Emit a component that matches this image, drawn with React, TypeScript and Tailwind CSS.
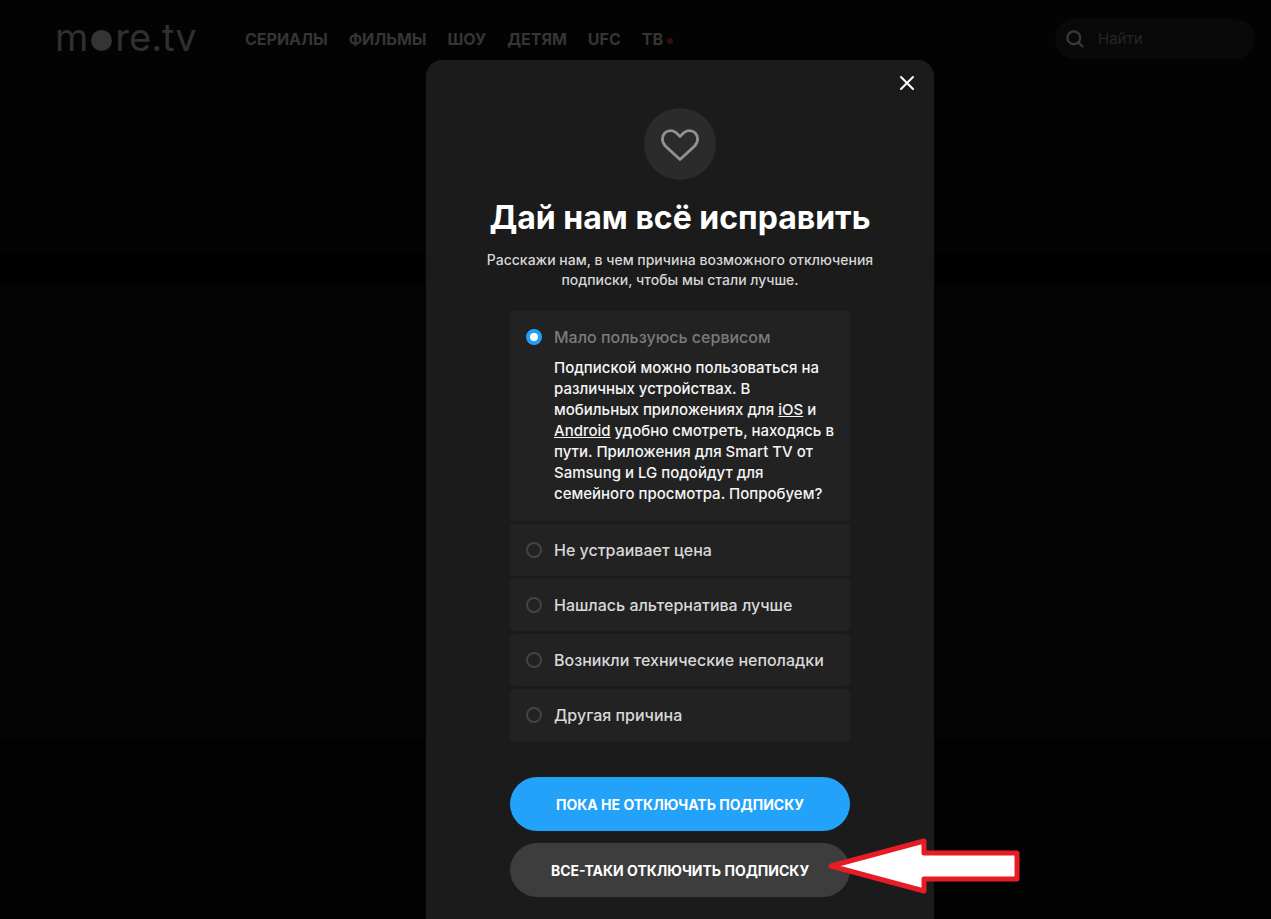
import React, { useState } from 'react'

const links = [
    { name: "Сериалы", url: "#series" },
    { name: "Фильмы", url: "#movies" },
    { name: "Шоу", url: "#shows" },
    { name: "Детям", url: "#kids" },
    { name: "UFC", url: "#ufc" },
    { name: "ТВ", url: "#tv", live: true }
]

const reasons = [
    { id: "rarely", label: "Мало пользуюсь сервисом" },
    { id: "price", label: "Не устраивает цена" },
    { id: "alternative", label: "Нашлась альтернатива лучше" },
    { id: "technical", label: "Возникли технические неполадки" },
    { id: "other", label: "Другая причина" }
]

const Logo = () => (
    <a href="#home" aria-label="more.tv" className="flex items-baseline gap-[3px] pb-1 text-[38px] leading-none text-[#303030]">
        <span>m</span>
        <span className="w-[21px] h-[21px] rounded-full bg-[#343434]"></span>
        <span>re.tv</span>
    </a>
)

const Header = () => (
    <header className="flex items-center h-[78px] pl-[55px] pr-4">
        <div className="w-[190px]">
            <Logo />
        </div>
        <nav>
            <ul className="flex items-center gap-[21px]">
                {links.map((link) => (
                    <li key={link.url}>
                        <a href={link.url} className="flex items-center gap-1 text-base leading-5 font-bold uppercase text-[#353535]">
                            {link.name}
                            {link.live && <span className="w-[6px] h-[6px] mt-1 rounded-full bg-[#3a0a0c]"></span>}
                        </a>
                    </li>
                ))}
            </ul>
        </nav>
        <label className="flex items-center gap-[14px] w-[200px] h-10 ml-auto pl-[11px] rounded-full bg-[#090909]">
            <svg width="18" height="18" viewBox="0 0 18 18" fill="none" stroke="#3a3a3a" strokeWidth="2.2" className="shrink-0">
                <circle cx="7.8" cy="7.8" r="6.4" />
                <path d="M12.4 12.4L17 17" />
            </svg>
            <input type="search" aria-label="Найти" placeholder="Найти" className="w-36 bg-transparent text-[15px] outline-none placeholder:text-[#252525]" />
        </label>
    </header>
)

const Pointer = () => (
    <svg width="198" height="60" viewBox="0 0 198 60" className="absolute left-[316px] -top-2 pointer-events-none" aria-hidden="true">
        <path d="M5 31L98 6V18H191V44H98V56Z" fill="#fff" stroke="#e81c24" strokeWidth="5" strokeLinejoin="round" />
    </svg>
)

const CancelDialog = () => {
    const [reason, setReason] = useState("rarely")
    return (
        <div role="dialog" aria-labelledby="dialog-title" className="relative w-[508px] pt-12 pb-12 rounded-t-2xl bg-[#1b1b1b] flex flex-col items-center">
            <button aria-label="Закрыть" className="absolute right-[19px] top-[15px] w-4 h-4">
                <svg width="16" height="16" viewBox="0 0 16 16" fill="none" stroke="#fff" strokeWidth="2" strokeLinecap="round">
                    <path d="M2 2L14 14M14 2L2 14" />
                </svg>
            </button>
            <div className="w-[72px] h-[72px] rounded-full bg-[#2b2b2b] flex items-center justify-center">
                <svg width="40" height="34" viewBox="0 0 40 34" fill="none" stroke="#929292" strokeWidth="2.8" strokeLinejoin="round" className="mt-[2px]">
                    <path d="M20 31.500L5.600 18.200C3.400 16 2.400 13.600 2.400 11C2.400 6.200 6 2.600 10.600 2.600C13.200 2.600 15.200 3.600 16.800 5.200L20 8.400L23.200 5.200C24.800 3.600 26.800 2.600 29.400 2.600C34 2.600 37.600 6.200 37.600 11C37.600 13.600 36.600 16 34.400 18.200Z" />
                </svg>
            </div>
            <h1 id="dialog-title" className="mt-[18px] text-[32px] leading-10 font-bold text-white whitespace-nowrap">Дай нам всё исправить</h1>
            <p className="mt-3 w-[400px] text-center text-[14px] leading-5 font-medium text-[#d6d6d6]">
                Расскажи нам, в чем причина возможного отключения подписки, чтобы мы стали лучше.
            </p>

            <div role="radiogroup" aria-labelledby="dialog-title" className="mt-[21px] w-[340px] flex flex-col gap-[3px]">
                {reasons.map((item) => {
                    const checked = reason === item.id
                    return (
                        <div key={item.id} className="rounded bg-[#222222]">
                            <label className={`flex items-center gap-3 px-4 text-base font-medium ${checked ? "pt-4 pb-[10px] leading-5 text-[#7b7b7b]" : "py-4 leading-5 text-[#d8d8d8]"}`}>
                                <input
                                    type="radio"
                                    name="reason"
                                    checked={checked}
                                    onChange={() => setReason(item.id)}
                                    className="appearance-none w-4 h-4 shrink-0 rounded-full border-2 border-[#434343] checked:border-4 checked:border-[#23a0f5] checked:bg-white"
                                />
                                {item.label}
                            </label>
                            {checked && item.id === "rarely" && (
                                <p className="pl-11 pr-4 pb-[17px] text-[15px] leading-[21px] font-medium text-[#f5f5f5]">
                                    Подпиской можно пользоваться на различных устройствах. В мобильных приложениях для <a href="#ios" className="underline">iOS</a> и <a href="#android" className="underline">Android</a> удобно смотреть, находясь в пути. Приложения для Smart TV от Samsung и LG подойдут для семейного просмотра. Попробуем?
                                </p>
                            )}
                        </div>
                    )
                })}
            </div>

            <div className="mt-9 w-[340px] flex flex-col gap-3">
                <button className="h-[54px] rounded-full bg-[#22a2f8] text-[14px] font-bold uppercase text-white">Пока не отключать подписку</button>
                <div className="relative">
                    <button className="w-full h-[54px] rounded-full bg-[#3d3d3d] text-[14px] font-bold uppercase text-white">Все-таки отключить подписку</button>
                    <Pointer />
                </div>
            </div>
        </div>
    )
}

const App: React.FC = () => {
    return (
        <div className="relative h-screen overflow-hidden bg-[#020202] font-['Inter','Open_Sans',sans-serif]">
            <div className="bg-[#030303]">
                <Header />
                <div className="h-[174px]"></div>
            </div>
            <div className="h-8 bg-[#010101]"></div>
            <div className="h-[454px] bg-[#040404]"></div>
            <div className="absolute inset-0 top-[60px] pl-[89px] flex justify-center items-start pointer-events-none">
                <div className="pointer-events-auto">
                    <CancelDialog />
                </div>
            </div>
        </div>
    )
}

export default App
